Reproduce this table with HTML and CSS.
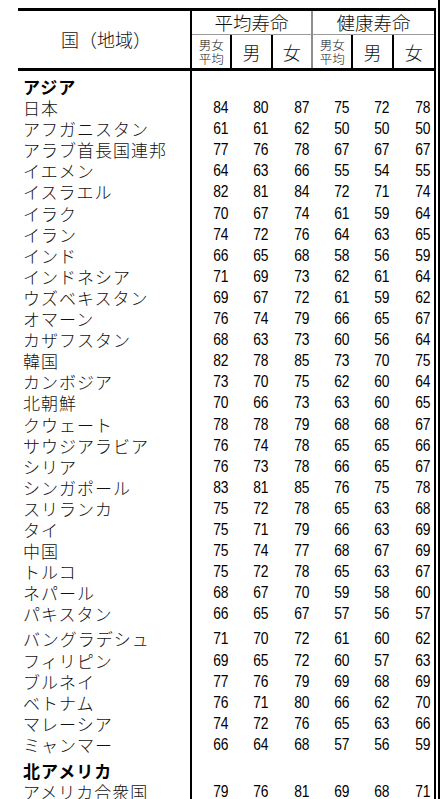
FILE: index.html
```html
<!DOCTYPE html>
<html lang="ja">
<head>
<meta charset="utf-8">
<title>平均寿命と健康寿命</title>
<link rel="stylesheet" href="styles.css">
</head>
<body>
<div class="page">
  <div class="sheet">
    <div class="head">
      <div class="h-country">国（地域）</div>
      <div class="h-group h-group-a">平均寿命</div>
      <div class="h-group h-group-b">健康寿命</div>
      <div class="h-sub h-small">男女<br>平均</div>
      <div class="h-sub">男</div>
      <div class="h-sub h-split">女</div>
      <div class="h-sub h-small">男女<br>平均</div>
      <div class="h-sub">男</div>
      <div class="h-sub h-last">女</div>
    </div>
    <div class="body">
      <div class="row group"><span class="name">アジア</span><span class="blank"></span></div>
      <div class="row"><span class="name">日本</span><span class="num">84</span><span class="num">80</span><span class="num">87</span><span class="num">75</span><span class="num">72</span><span class="num">78</span></div>
      <div class="row"><span class="name">アフガニスタン</span><span class="num">61</span><span class="num">61</span><span class="num">62</span><span class="num">50</span><span class="num">50</span><span class="num">50</span></div>
      <div class="row"><span class="name">アラブ首長国連邦</span><span class="num">77</span><span class="num">76</span><span class="num">78</span><span class="num">67</span><span class="num">67</span><span class="num">67</span></div>
      <div class="row"><span class="name">イエメン</span><span class="num">64</span><span class="num">63</span><span class="num">66</span><span class="num">55</span><span class="num">54</span><span class="num">55</span></div>
      <div class="row"><span class="name">イスラエル</span><span class="num">82</span><span class="num">81</span><span class="num">84</span><span class="num">72</span><span class="num">71</span><span class="num">74</span></div>
      <div class="row"><span class="name">イラク</span><span class="num">70</span><span class="num">67</span><span class="num">74</span><span class="num">61</span><span class="num">59</span><span class="num">64</span></div>
      <div class="row"><span class="name">イラン</span><span class="num">74</span><span class="num">72</span><span class="num">76</span><span class="num">64</span><span class="num">63</span><span class="num">65</span></div>
      <div class="row"><span class="name">インド</span><span class="num">66</span><span class="num">65</span><span class="num">68</span><span class="num">58</span><span class="num">56</span><span class="num">59</span></div>
      <div class="row"><span class="name">インドネシア</span><span class="num">71</span><span class="num">69</span><span class="num">73</span><span class="num">62</span><span class="num">61</span><span class="num">64</span></div>
      <div class="row"><span class="name">ウズベキスタン</span><span class="num">69</span><span class="num">67</span><span class="num">72</span><span class="num">61</span><span class="num">59</span><span class="num">62</span></div>
      <div class="row"><span class="name">オマーン</span><span class="num">76</span><span class="num">74</span><span class="num">79</span><span class="num">66</span><span class="num">65</span><span class="num">67</span></div>
      <div class="row"><span class="name">カザフスタン</span><span class="num">68</span><span class="num">63</span><span class="num">73</span><span class="num">60</span><span class="num">56</span><span class="num">64</span></div>
      <div class="row"><span class="name">韓国</span><span class="num">82</span><span class="num">78</span><span class="num">85</span><span class="num">73</span><span class="num">70</span><span class="num">75</span></div>
      <div class="row"><span class="name">カンボジア</span><span class="num">73</span><span class="num">70</span><span class="num">75</span><span class="num">62</span><span class="num">60</span><span class="num">64</span></div>
      <div class="row"><span class="name">北朝鮮</span><span class="num">70</span><span class="num">66</span><span class="num">73</span><span class="num">63</span><span class="num">60</span><span class="num">65</span></div>
      <div class="row"><span class="name">クウェート</span><span class="num">78</span><span class="num">78</span><span class="num">79</span><span class="num">68</span><span class="num">68</span><span class="num">67</span></div>
      <div class="row"><span class="name">サウジアラビア</span><span class="num">76</span><span class="num">74</span><span class="num">78</span><span class="num">65</span><span class="num">65</span><span class="num">66</span></div>
      <div class="row"><span class="name">シリア</span><span class="num">76</span><span class="num">73</span><span class="num">78</span><span class="num">66</span><span class="num">65</span><span class="num">67</span></div>
      <div class="row"><span class="name">シンガポール</span><span class="num">83</span><span class="num">81</span><span class="num">85</span><span class="num">76</span><span class="num">75</span><span class="num">78</span></div>
      <div class="row"><span class="name">スリランカ</span><span class="num">75</span><span class="num">72</span><span class="num">78</span><span class="num">65</span><span class="num">63</span><span class="num">68</span></div>
      <div class="row"><span class="name">タイ</span><span class="num">75</span><span class="num">71</span><span class="num">79</span><span class="num">66</span><span class="num">63</span><span class="num">69</span></div>
      <div class="row"><span class="name">中国</span><span class="num">75</span><span class="num">74</span><span class="num">77</span><span class="num">68</span><span class="num">67</span><span class="num">69</span></div>
      <div class="row"><span class="name">トルコ</span><span class="num">75</span><span class="num">72</span><span class="num">78</span><span class="num">65</span><span class="num">63</span><span class="num">67</span></div>
      <div class="row"><span class="name">ネパール</span><span class="num">68</span><span class="num">67</span><span class="num">70</span><span class="num">59</span><span class="num">58</span><span class="num">60</span></div>
      <div class="row"><span class="name">パキスタン</span><span class="num">66</span><span class="num">65</span><span class="num">67</span><span class="num">57</span><span class="num">56</span><span class="num">57</span></div>
      <div class="row gap"><span class="name">バングラデシュ</span><span class="num">71</span><span class="num">70</span><span class="num">72</span><span class="num">61</span><span class="num">60</span><span class="num">62</span></div>
      <div class="row"><span class="name">フィリピン</span><span class="num">69</span><span class="num">65</span><span class="num">72</span><span class="num">60</span><span class="num">57</span><span class="num">63</span></div>
      <div class="row"><span class="name">ブルネイ</span><span class="num">77</span><span class="num">76</span><span class="num">79</span><span class="num">69</span><span class="num">68</span><span class="num">69</span></div>
      <div class="row"><span class="name">ベトナム</span><span class="num">76</span><span class="num">71</span><span class="num">80</span><span class="num">66</span><span class="num">62</span><span class="num">70</span></div>
      <div class="row"><span class="name">マレーシア</span><span class="num">74</span><span class="num">72</span><span class="num">76</span><span class="num">65</span><span class="num">63</span><span class="num">66</span></div>
      <div class="row"><span class="name">ミャンマー</span><span class="num">66</span><span class="num">64</span><span class="num">68</span><span class="num">57</span><span class="num">56</span><span class="num">59</span></div>
      <div class="row group"><span class="name">北アメリカ</span><span class="blank"></span></div>
      <div class="row"><span class="name">アメリカ合衆国</span><span class="num">79</span><span class="num">76</span><span class="num">81</span><span class="num">69</span><span class="num">68</span><span class="num">71</span></div>
    </div>
  </div>
</div>
</body>
</html>
```
FILE: styles.css
```css
html, body {
  margin: 0;
  padding: 0;
  background: #fff;
}

.page {
  width: 440px;
  min-height: 799px;
  box-sizing: border-box;
  border-right: 2px solid #000;
  padding: 8px 2px 0 18px;
}

.sheet {
  border-top: 3px solid #000;
  border-right: 2px solid #000;
  color: #111;
  font-family: "Noto Sans CJK JP", sans-serif;
  font-weight: 300;
}

/* ---------- header ---------- */
.head {
  display: grid;
  grid-template-columns: 174px repeat(6, 1fr);
  grid-template-rows: 23px 1px 33px;
  border-bottom: 3px solid #000;
}

.h-country {
  grid-column: 1;
  grid-row: 1 / 4;
  border-right: 2px solid #000;
  display: flex;
  align-items: center;
  justify-content: center;
  font-size: 18px;
  padding-left: 4px;
  padding-bottom: 2px;
}

.h-group {
  grid-row: 1 / 3;
  display: flex;
  align-items: center;
  justify-content: center;
  font-size: 18.5px;
  line-height: 1;
  border-bottom: 1px solid #9a9a9a;
}

.h-group-a {
  grid-column: 2 / 5;
  border-right: 2px solid #8e8e8e;
}

.h-group-b {
  grid-column: 5 / 8;
}

.h-sub {
  grid-row: 3;
  border-right: 2px solid #000;
  display: flex;
  align-items: center;
  justify-content: center;
  font-size: 18px;
  line-height: 1;
}

.h-small {
  font-size: 12.5px;
  line-height: 14px;
  text-align: center;
  padding-top: 1px;
}

.h-split {
  border-right-color: #8e8e8e;
}

.h-last {
  border-right: none;
}

/* ---------- body ---------- */
.row {
  display: grid;
  grid-template-columns: 174px repeat(6, 1fr);
}

.row > span {
  line-height: 21.1px;
}

.name {
  border-right: 2px solid #000;
  padding-left: 5px;
  font-size: 17px;
  letter-spacing: 1px;
  white-space: nowrap;
}

.num {
  text-align: right;
  padding-right: 4.5px;
  font-family: "Liberation Sans", Arial, sans-serif;
  font-weight: 400;
  font-size: 16.5px;
  color: #000;
  transform: scaleX(0.84);
  transform-origin: right center;
}

.blank {
  grid-column: 2 / -1;
}

.group > span {
  padding-top: 5px;
}

.group .name {
  font-weight: 700;
  color: #000;
}

.gap > span {
  padding-top: 4px;
}
```
